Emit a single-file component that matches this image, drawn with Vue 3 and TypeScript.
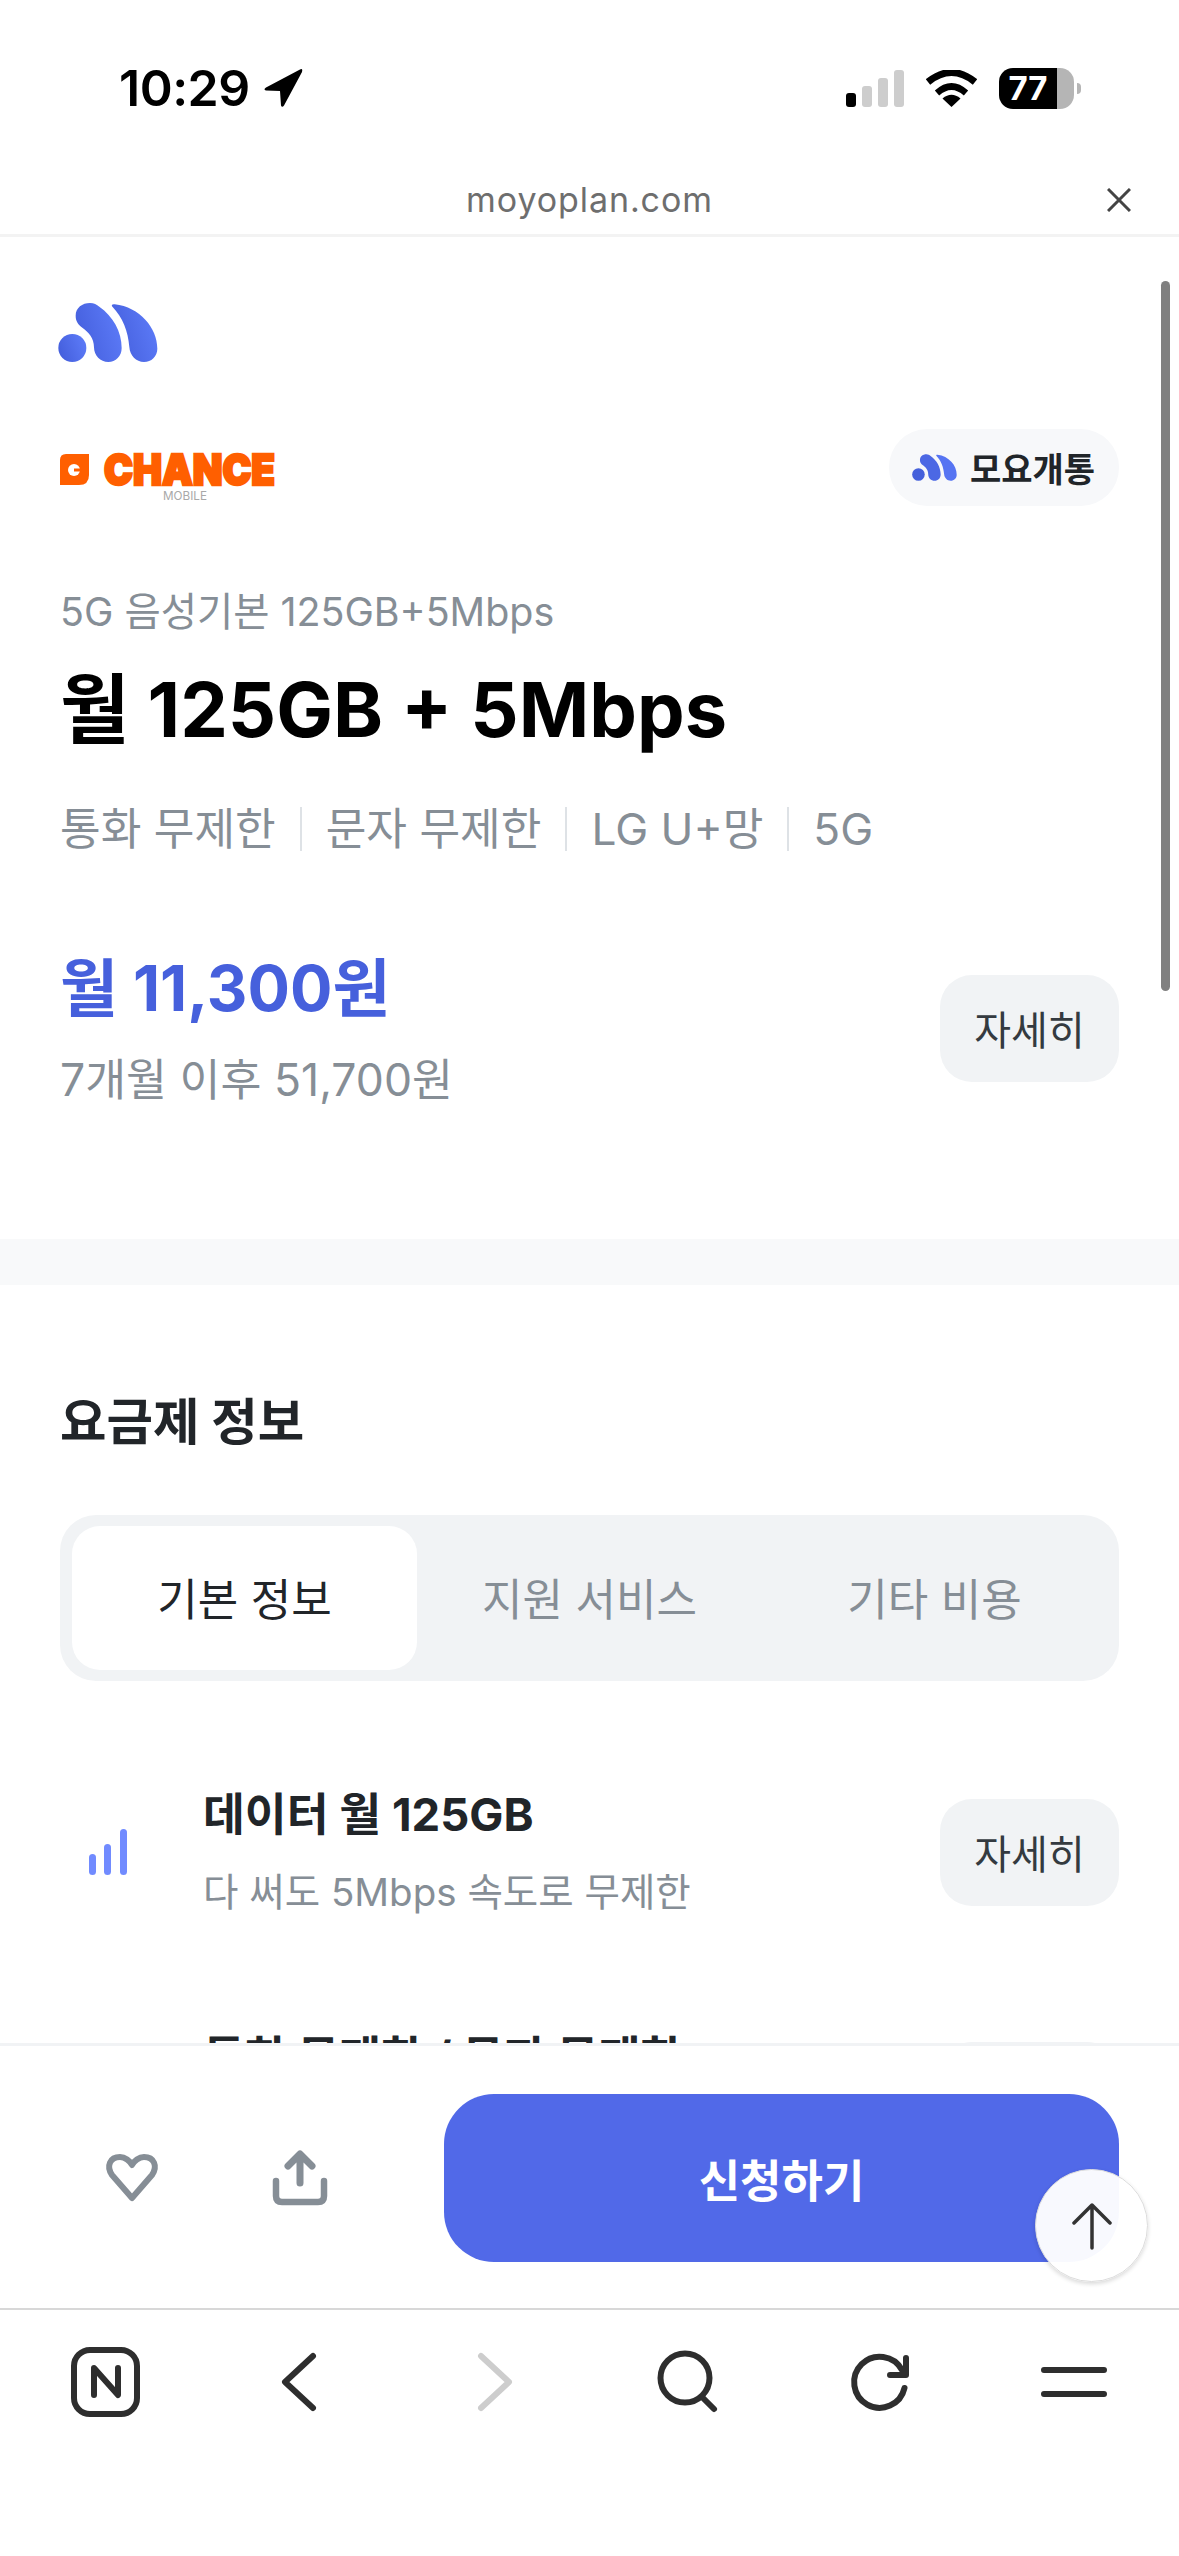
<script setup lang="ts">
import { ref } from 'vue';

interface PlanRow {
  title: string;
  sub?: string;
  bars: boolean;
}

const tabs = ['기본 정보', '지원 서비스', '기타 비용'];
const activeTab = ref(0);
const tags = ['통화 무제한', '문자 무제한', 'LG U+망', '5G'];
const rows: PlanRow[] = [
  { title: '데이터 월 125GB', sub: '다 써도 5Mbps 속도로 무제한', bars: true },
  { title: '통화 무제한 / 문자 무제한', bars: false },
];
</script>

<template>
  <div class="phone">
    <header class="status">
      <div class="status__left">
        <span class="status__time">10:29</span>
        <svg class="status__arrow" width="40" height="40" viewBox="0 0 40 40">
          <path d="M37 1.500 3 19.500Q0 21.500 3 22.500L17 23 18 37.500Q19 40 21 37.500L39 4Q40 0 37 1.500Z" />
        </svg>
      </div>
      <div class="status__right">
        <div class="signal">
          <i class="signal__bar signal__bar--on" style="height: 14px"></i>
          <i class="signal__bar" style="height: 21px"></i>
          <i class="signal__bar" style="height: 29px"></i>
          <i class="signal__bar" style="height: 37px"></i>
        </div>
        <svg width="51" height="37" viewBox="0 0 51 37" fill="none" stroke="#000">
          <path d="M2 12Q25.500-7 49 12" stroke-width="7" />
          <path d="M11 23Q25.500 10 40 23" stroke-width="6.500" />
          <path d="M25.500 37 16.500 28.500Q25.500 21 34.500 28.500Z" fill="#000" stroke="none" />
        </svg>
        <div class="battery"><span>77</span></div>
      </div>
    </header>

    <div class="urlbar">
      <span></span>
      <span class="urlbar__host">moyoplan.com</span>
      <svg class="urlbar__close" width="24" height="24" viewBox="0 0 24 24" fill="none" stroke="#444" stroke-width="3">
        <path d="M1 1 23 23M23 1 1 23" />
      </svg>
    </div>

    <main class="page">
      <section class="plan">
        <svg class="brand" width="100" height="59" viewBox="0 0 300 177">
          <defs>
            <linearGradient id="brand-fill" x1="0" y1="1" x2="1" y2="0.6">
              <stop offset="0" stop-color="#415bd9" />
              <stop offset="1" stop-color="#5a78f5" />
            </linearGradient>
          </defs>
          <circle cx="43" cy="135" r="42" fill="url(#brand-fill)" />
          <path fill="url(#brand-fill)" d="M53 38C53 14 73 0 96 0 108 0 116 5 124 11 165 40 191 85 191 135 191 160 173 177 151 177 127 177 108 158 108 133 108 105 92 88 73 74 60 64 53 54 53 38Z" />
          <path fill="url(#brand-fill)" d="M162 10C160 5 164 3 170 4 245 12 298 75 298 137 298 160 280 177 258 177 234 177 216 158 214 132 210 85 195 45 162 10Z" />
        </svg>

        <div class="plan__brands">
          <svg class="chance" width="215" height="77" viewBox="0 0 215 77">
            <path fill="#ff5f00" d="M6 25H29V46Q29 56 19 56H0V31Q0 25 6 25Z" />
            <circle cx="14" cy="41" r="6" fill="#fff" />
            <path fill="#ff5f00" d="M14 39.500H21V42.500H14Z" />
            <text x="44" y="55.500" textLength="171" lengthAdjust="spacingAndGlyphs" class="chance__name">CHANCE</text>
            <text x="103" y="71" textLength="44" lengthAdjust="spacingAndGlyphs" class="chance__sub">MOBILE</text>
          </svg>
          <div class="pill">
            <svg width="45" height="27" viewBox="0 0 300 177">
              <circle cx="43" cy="135" r="42" fill="#4560db" />
              <path fill="#4c68e4" d="M53 38C53 14 73 0 96 0 108 0 116 5 124 11 165 40 191 85 191 135 191 160 173 177 151 177 127 177 108 158 108 133 108 105 92 88 73 74 60 64 53 54 53 38Z" />
              <path fill="#5674f2" d="M162 10C160 5 164 3 170 4 245 12 298 75 298 137 298 160 280 177 258 177 234 177 216 158 214 132 210 85 195 45 162 10Z" />
            </svg>
            <span>모요개통</span>
          </div>
        </div>

        <p class="plan__name">5G 음성기본 125GB+5Mbps</p>
        <h1 class="plan__title">월 125GB + 5Mbps</h1>
        <ul class="tags">
          <li v-for="tag in tags" :key="tag" class="tags__item">{{ tag }}</li>
        </ul>

        <div class="price">
          <div>
            <p class="price__now">월 11,300원</p>
            <p class="price__later">7개월 이후 51,700원</p>
          </div>
          <button class="more" type="button">자세히</button>
        </div>
      </section>

      <div class="divider"></div>

      <section class="info">
        <h2 class="info__title">요금제 정보</h2>
        <div class="segment">
          <button
            v-for="(tab, index) in tabs"
            :key="tab"
            class="segment__tab"
            :class="{ 'segment__tab--active': index === activeTab }"
            type="button"
            @click="activeTab = index"
          >
            {{ tab }}
          </button>
        </div>
        <div class="rows">
          <div v-for="row in rows" :key="row.title" class="row">
            <div class="row__icon">
              <svg v-if="row.bars" width="38" height="46" viewBox="0 0 38 46" fill="#718bff">
                <rect x="0" y="25" width="7" height="21" rx="3.500" />
                <rect x="15" y="15" width="7" height="31" rx="3.500" />
                <rect x="31" y="0" width="7" height="46" rx="3.500" />
              </svg>
            </div>
            <div class="row__text">
              <p class="row__title">{{ row.title }}</p>
              <p v-if="row.sub" class="row__sub">{{ row.sub }}</p>
            </div>
            <button class="more" type="button">자세히</button>
          </div>
        </div>
      </section>
    </main>

    <div class="actions">
      <div class="actions__icons">
        <button class="actions__icon" type="button" aria-label="찜하기">
          <svg width="56" height="50" viewBox="0 0 56 50" fill="none" stroke="#868e96" stroke-width="6" stroke-linejoin="round">
            <path d="M28 45 8 22C2 13 6 4 16 4 21 4 26 8 28 12 30 8 35 4 40 4 50 4 54 13 48 22Z" />
          </svg>
        </button>
        <button class="actions__icon" type="button" aria-label="공유하기">
          <svg width="56" height="56" viewBox="0 0 56 56" fill="none" stroke="#868e96" stroke-linecap="round" stroke-linejoin="round">
            <path d="M28 33V5M16 16 28 4 40 16" stroke-width="7" />
            <path d="M4 31V46Q4 52 10 52H46Q52 52 52 46V31" stroke-width="6.500" />
          </svg>
        </button>
      </div>
      <button class="apply" type="button">신청하기</button>
      <button class="to-top" type="button" aria-label="맨 위로">
        <svg width="40" height="48" viewBox="0 0 40 48" fill="none" stroke="#333" stroke-width="3.500" stroke-linecap="round" stroke-linejoin="round">
          <path d="M20 46V3M2 21 20 3 38 21" />
        </svg>
      </button>
    </div>

    <nav class="browser">
      <svg width="110" height="70" viewBox="0 0 110 70" fill="none" stroke="#2e2e2e" stroke-width="6" stroke-linecap="round" stroke-linejoin="round">
        <rect x="24" y="3" width="63" height="64" rx="16" />
        <path d="M44 48V21L68 48V21" />
      </svg>
      <svg width="110" height="70" viewBox="0 0 110 70" fill="none" stroke="#2e2e2e" stroke-width="6" stroke-linecap="round" stroke-linejoin="round">
        <path d="M69 9 41 35 69 61" />
      </svg>
      <svg width="110" height="70" viewBox="0 0 110 70" fill="none" stroke="#cdcdcd" stroke-width="6" stroke-linecap="round" stroke-linejoin="round">
        <path d="M43 9 71 35 43 61" />
      </svg>
      <svg width="110" height="70" viewBox="0 0 110 70" fill="none" stroke="#2e2e2e" stroke-width="6" stroke-linecap="round" stroke-linejoin="round">
        <circle cx="54" cy="31" r="24.500" />
        <path d="M72 51 83 62" />
      </svg>
      <svg width="110" height="70" viewBox="0 0 110 70" fill="none" stroke="#2e2e2e" stroke-width="6" stroke-linecap="round" stroke-linejoin="round">
        <path d="M79.500 41A25.500 25.500 0 1 1 77 23" />
        <path d="M81 11V28H65" />
      </svg>
      <svg width="110" height="70" viewBox="0 0 110 70" fill="none" stroke="#2e2e2e" stroke-width="6" stroke-linecap="round">
        <path d="M25 23H85M25 47H85" />
      </svg>
    </nav>

    <div class="scrollbar"></div>
  </div>
</template>

<style scoped>
.phone {
  position: relative;
  display: flex;
  flex-direction: column;
  width: 1179px;
  height: 2556px;
  overflow: hidden;
  background: #fff;
  color: #212529;
  font-family: Inter, "Noto Sans CJK KR", sans-serif;
}

p,
h1,
h2,
ul {
  margin: 0;
  padding: 0;
}

button {
  border: 0;
  padding: 0;
  font-family: inherit;
  cursor: pointer;
}

.status {
  display: flex;
  flex: none;
  align-items: center;
  justify-content: space-between;
  box-sizing: border-box;
  height: 165px;
  padding: 11px 105px 0 119px;
}

.status__left {
  display: flex;
  align-items: center;
  gap: 13px;
}

.status__time {
  color: #000;
  font-size: 50px;
  font-weight: 600;
  line-height: 42px;
  letter-spacing: -0.5px;
}

.status__right {
  display: flex;
  align-items: center;
  gap: 22px;
}

.signal {
  display: flex;
  align-items: flex-end;
  gap: 6px;
  height: 37px;
}

.signal__bar {
  display: block;
  width: 10px;
  border-radius: 3px;
  background: #cdcdcd;
}

.signal__bar--on {
  background: #000;
}

.battery {
  position: relative;
  width: 75px;
  height: 41px;
  border-radius: 14px;
  background: linear-gradient(90deg, #000 77%, #b5b5b5 77%);
  color: #fff;
  font-size: 33px;
  font-weight: 700;
  line-height: 41px;
}

.battery span {
  display: block;
  width: 58px;
  text-align: center;
}

.battery::after {
  content: "";
  position: absolute;
  top: 15px;
  right: -7px;
  width: 4px;
  height: 11px;
  border-radius: 0 6px 6px 0;
  background: #b5b5b5;
}

.urlbar {
  display: grid;
  flex: none;
  grid-template-columns: 1fr auto 1fr;
  align-items: center;
  box-sizing: border-box;
  height: 72px;
  padding-right: 48px;
  border-bottom: 3px solid #f3f3f3;
}

.urlbar__host {
  margin-left: 48px;
  color: #6e6e6e;
  font-size: 34px;
  letter-spacing: 0.9px;
}

.urlbar__close {
  justify-self: end;
}

.page {
  flex: 1;
  min-height: 0;
  overflow: hidden;
}

.plan {
  padding: 66px 60px 131px;
}

.brand {
  display: block;
  margin-left: -2px;
}

.plan__brands {
  display: flex;
  align-items: center;
  justify-content: space-between;
  margin-top: 67px;
}

.chance {
  display: block;
}

.chance__name {
  fill: #ff5f00;
  stroke: #ff5f00;
  stroke-width: 2.5px;
  font-size: 42px;
  font-weight: 900;
}

.chance__sub {
  fill: #a8a8a8;
  font-size: 12px;
}

.pill {
  display: flex;
  align-items: center;
  gap: 13px;
  box-sizing: border-box;
  height: 77px;
  padding: 0 24px 0 23px;
  border-radius: 38px;
  background: #f7f8fa;
  font-size: 34px;
  font-weight: 700;
}

.plan__name {
  margin-top: 81px;
  color: #868e96;
  font-size: 39.4px;
  line-height: 50px;
}

.plan__title {
  margin-top: 28px;
  color: #000;
  font-size: 75.7px;
  font-weight: 700;
  line-height: 90px;
}

.tags {
  display: flex;
  align-items: center;
  gap: 24px;
  margin-top: 44px;
  list-style: none;
}

.tags__item {
  display: flex;
  align-items: center;
  gap: 24px;
  color: #868e96;
  font-size: 44.2px;
  line-height: 60px;
}

.tags__item:not(:last-child)::after {
  content: "";
  width: 2px;
  height: 44px;
  background: #dee2e6;
}

.price {
  display: flex;
  align-items: center;
  justify-content: space-between;
  margin-top: 89px;
}

.price__now {
  color: #4660dc;
  font-size: 63px;
  font-weight: 700;
  line-height: 80px;
}

.price__later {
  margin-top: 24px;
  color: #868e96;
  font-size: 44.5px;
  line-height: 56px;
}

.more {
  flex: none;
  width: 179px;
  height: 107px;
  border-radius: 32px;
  background: #f1f3f5;
  color: #343a40;
  font-size: 40px;
}

.divider {
  height: 46px;
  background: #f8f9fa;
}

.info {
  padding: 102px 60px 0;
}

.info__title {
  font-size: 50.5px;
  font-weight: 700;
  line-height: 70px;
}

.segment {
  display: grid;
  grid-template-columns: repeat(3, 1fr);
  box-sizing: border-box;
  height: 166px;
  margin-top: 58px;
  padding: 11px 12px;
  border-radius: 36px;
  background: #f1f3f5;
}

.segment__tab {
  padding-bottom: 3px;
  border-radius: 28px;
  background: transparent;
  color: #868e96;
  font-size: 44px;
}

.segment__tab--active {
  background: #fff;
  color: #212529;
}

.rows {
  display: flex;
  flex-direction: column;
  gap: 109px;
  margin-top: 104px;
}

.row {
  display: flex;
  align-items: center;
}

.row__icon {
  display: flex;
  flex: none;
  justify-content: flex-start;
  box-sizing: border-box;
  width: 143px;
  padding-left: 29px;
}

.row__text {
  flex: 1;
  min-height: 134px;
}

.row__title {
  font-size: 45.5px;
  font-weight: 700;
  line-height: 60px;
}

.row__sub {
  margin-top: 20px;
  color: #868e96;
  font-size: 38.5px;
  line-height: 54px;
}

.actions {
  position: relative;
  display: flex;
  flex: none;
  box-sizing: border-box;
  height: 267px;
  padding: 48px 60px 0;
  border-top: 3px solid #f1f3f5;
  border-bottom: 2px solid #d8d8d8;
  background: #fff;
}

.actions__icons {
  display: flex;
  flex: none;
  gap: 24px;
  width: 384px;
  height: 168px;
}

.actions__icon {
  display: flex;
  align-items: center;
  justify-content: center;
  width: 144px;
  background: none;
}

.apply {
  flex: 1;
  height: 168px;
  border-radius: 50px;
  background: #5169e8;
  color: #fff;
  font-size: 45px;
  font-weight: 700;
}

.to-top {
  position: absolute;
  right: 31px;
  bottom: 26px;
  display: flex;
  align-items: center;
  justify-content: center;
  box-sizing: border-box;
  width: 113px;
  height: 113px;
  border: 1px solid #dcdcdc;
  border-radius: 50%;
  background: rgba(255, 255, 255, 0.96);
  box-shadow: 0 2px 4px rgba(0, 0, 0, 0.15);
}

.browser {
  display: grid;
  flex: none;
  grid-template-columns: repeat(6, 1fr);
  align-items: start;
  justify-items: center;
  box-sizing: border-box;
  height: 246px;
  padding: 37px 8px 0;
}

.scrollbar {
  position: absolute;
  top: 281px;
  right: 9px;
  width: 9px;
  height: 710px;
  border-radius: 5px;
  background: #808080;
}
</style>

<style>
html,
body {
  margin: 0;
  background: #fff;
}
</style>
